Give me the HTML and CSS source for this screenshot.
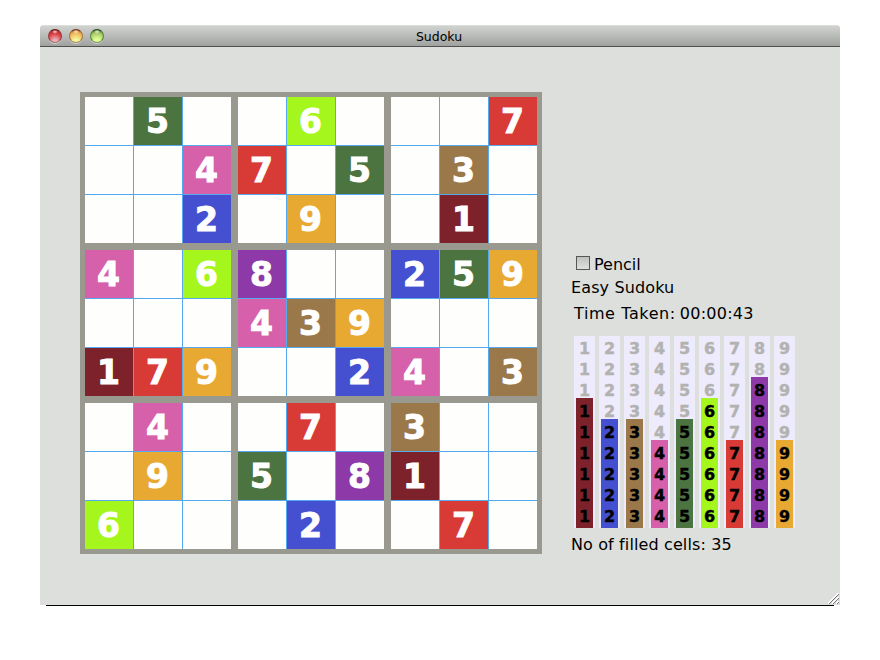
FILE: index.html
```html
<!DOCTYPE html>
<html lang="en">
<head>
<meta charset="utf-8">
<title>Sudoku</title>
<link rel="stylesheet" href="styles.css">
</head>
<body>
<div class="window">
  <header class="titlebar">
    <div class="lights">
      <span class="light red"></span><span class="light amber"></span><span class="light green"></span>
    </div>
    <h1 class="title">Sudoku</h1>
  </header>
  <main class="content">
    <div class="board" id="board"></div>
    <aside class="panel">
      <label class="pencil"><span class="box"></span><span class="pencil-text">Pencil</span></label>
      <p class="level">Easy Sudoku</p>
      <p class="time"><span class="time-label">Time Taken:</span><span class="time-value">00:00:43</span></p>
      <div class="chart" id="chart"></div>
      <p class="filled-count">No of filled cells: 35</p>
    </aside>
  </main>
  <svg class="grip" width="12" height="12" viewBox="0 0 12 12" shape-rendering="crispEdges">
    <path d="M0 10.5L10.5 0M4 10.5L10.5 4M8 10.5L10.5 8" stroke="#fff" fill="none"/>
    <path d="M1 11L11 1M5 11L11 5M9 11L11 9" stroke="#777873" fill="none"/>
  </svg>
</div>
<div class="shadow"></div>
<script src="script.js"></script>
</body>
</html>
```
FILE: styles.css
```css
* { box-sizing: border-box; }
body {
  margin: 0;
  padding: 25px 40px 0;
  height: 660px;
  overflow: hidden;
  background: #fff;
  color: #000;
  font-family: "DejaVu Sans", sans-serif;
}
.window {
  position: relative;
  height: 580px;
  background: #dcdfdc;
  border-radius: 4px 4px 0 0;
  overflow: hidden;
}
.titlebar {
  position: relative;
  display: flex;
  align-items: center;
  height: 22px;
  padding-left: 8px;
  background: linear-gradient(#d0d2cf, #c3c5c2 30%, #a0a29f);
  border-top: 1px solid #dcdedb;
  border-bottom: 1px solid #51524f;
}
.lights { display: flex; gap: 7px; }
.light {
  width: 14px;
  height: 14px;
  border-radius: 50%;
  border: 1px solid;
  box-shadow: 0 1px 0 #cfd1ce;
}
.red {
  border-color: #65191d #98393d #a77778;
  background: radial-gradient(ellipse 3px 2px at 50% 15%, #f3d5d2, transparent), radial-gradient(circle at 50% 95%, #e8b0b8 0 15%, #dc3f43 60%, #9d2024);
}
.amber {
  border-color: #713318 #a5713c #a98d68;
  background: radial-gradient(ellipse 3px 2px at 50% 15%, #fae9d7, transparent), radial-gradient(circle at 50% 95%, #f5f59a 0 20%, #f0b757 65%, #a9541d);
}
.green {
  border-color: #20491a #54823a #819668;
  background: radial-gradient(ellipse 3px 2px at 50% 15%, #e1efd9, transparent), radial-gradient(circle at 50% 95%, #dfff94 0 20%, #a6ca67 65%, #36661f);
}
.title {
  flex: 1;
  margin: 0 105px 0 39px;
  padding-top: 1px;
  text-align: center;
  font-size: 12.5px;
  font-weight: 400;
  line-height: 20px;
}
.content {
  display: flex;
  align-items: flex-start;
  padding: 45px 40px 0;
}
.board {
  display: grid;
  grid-template-columns: repeat(3, 146px);
  gap: 7px;
  padding: 5px;
  background: #99998f;
}
.block {
  display: grid;
  grid-template-columns: repeat(3, 48px);
  grid-auto-rows: 48px;
  gap: 1px;
  background: #55a9ee;
}
.cell {
  background: #fefefd;
  color: #fff;
  text-align: center;
  font-size: 33px;
  font-weight: 700;
  line-height: 50px;
  -webkit-text-stroke: 1px #fff;
  padding-right: 1px;
  height: 48px;
}
.n1 { background: #7d222b; }
.n2 { background: #4450d0; }
.n3 { background: #9b7849; }
.n4 { background: #d660aa; }
.n5 { background: #4b7440; }
.n6 { background: #a4f61d; }
.n7 { background: #d83a36; }
.n8 { background: #8d39a8; }
.n9 { background: #e8a932; }
.panel {
  width: 240px;
  margin-left: 29px;
  padding-top: 160px;
  font-size: 16px;
  line-height: 24px;
  white-space: nowrap;
  letter-spacing: 0.12px;
}
.panel p { margin: 0; }
.pencil { display: flex; align-items: center; height: 24px; padding-left: 5px; }
.pencil-text { padding-top: 2px; letter-spacing: 0; }
.box {
  width: 14px;
  height: 14px;
  margin: 0 4px 2px 0;
  border: 1px solid #555753;
  background: linear-gradient(#bfc1be, #dfe1de);
}
.panel .time { display: flex; margin: 2px 0 0 3px; }
.time-label { letter-spacing: 0.6px; }
.time-value { margin-left: 4px; letter-spacing: 0.25px; }
.chart {
  display: flex;
  gap: 4px;
  height: 192px;
  margin: 10px 0 5px 3px;
  font-size: 16px;
  font-weight: 700;
  line-height: 21px;
  letter-spacing: 0;
  text-align: center;
}
.column {
  display: flex;
  flex-direction: column;
  width: 21px;
  padding: 0 2px;
  background: #eeebfc;
  -webkit-text-stroke: 0.4px;
}
.column span { display: block; height: 21px; }
.left { flex: 1; min-height: 0; padding-top: 2px; color: #b2b2b0; }
.bar { width: 17px; padding: 3px 0 1px; }
.grip { position: absolute; right: 0; bottom: 0; }
.shadow { height: 1px; margin: 0 6px; background: #000; }
```
FILE: script.js
```js
const rows = [
  ".5..6...7",
  "..47.5.3.",
  "..2.9..1.",
  "4.68..259",
  "...439...",
  "179..24.3",
  ".4..7.3..",
  ".9.5.81..",
  "6...2..7."
];

const board = document.getElementById("board");
for (let b = 0; b < 9; b++) {
  const block = document.createElement("div");
  block.className = "block";
  for (let i = 0; i < 9; i++) {
    const r = Math.floor(b / 3) * 3 + Math.floor(i / 3);
    const c = (b % 3) * 3 + (i % 3);
    const cell = document.createElement("div");
    const value = rows[r][c];
    cell.className = "cell";
    if (value !== ".") {
      cell.classList.add("n" + value);
      cell.textContent = value;
    }
    block.append(cell);
  }
  board.append(block);
}

const barSizes = [6, 5, 5, 4, 5, 6, 4, 7, 4];
const chart = document.getElementById("chart");
barSizes.forEach((size, i) => {
  const n = i + 1;
  const digit = `<span>${n}</span>`;
  const column = document.createElement("div");
  column.className = "column";
  column.innerHTML =
    `<div class="left">${digit.repeat(9 - size)}</div>` +
    `<div class="bar n${n}">${digit.repeat(size)}</div>`;
  chart.append(column);
});
```
